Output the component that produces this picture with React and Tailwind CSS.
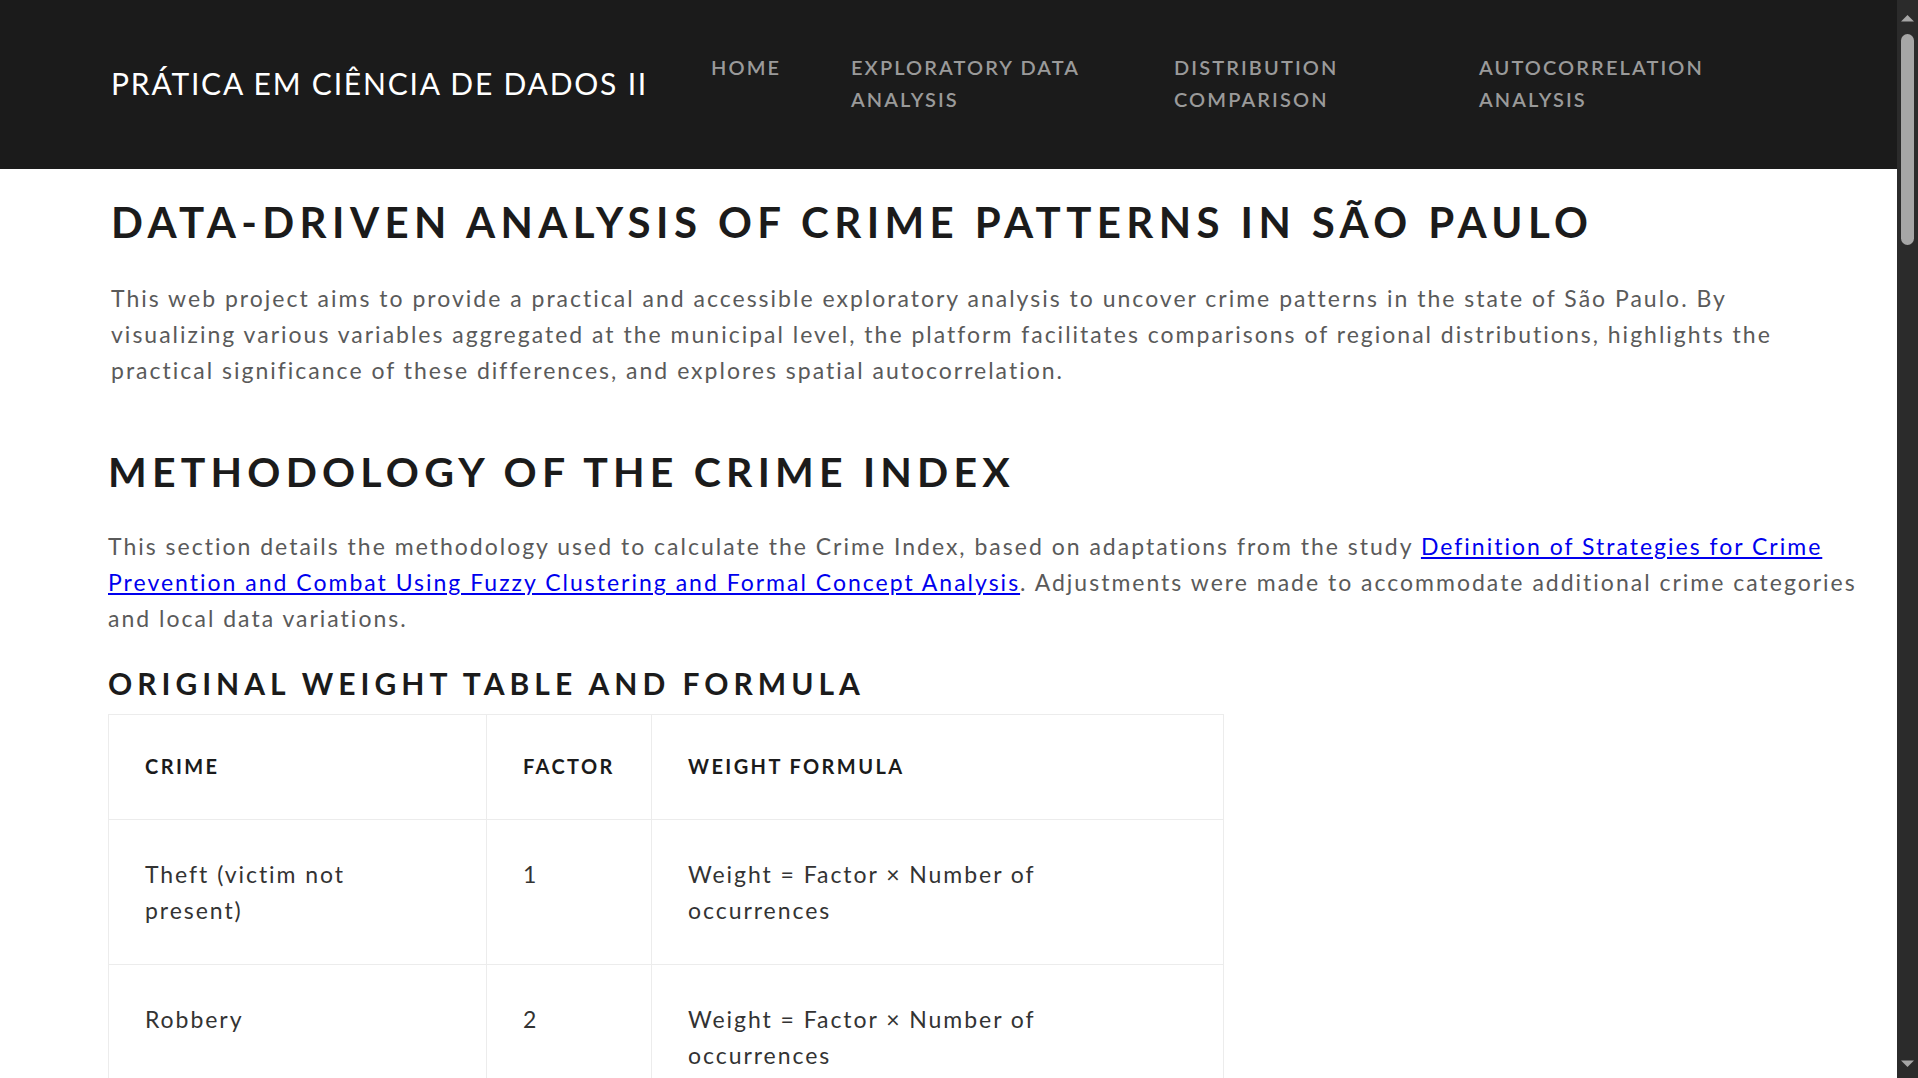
import React from "react";

const navItems = [
  { w: "w-[140px]", lines: ["HOME"] },
  { w: "w-[323px]", lines: ["EXPLORATORY DATA", "ANALYSIS"] },
  { w: "w-[305px]", lines: ["DISTRIBUTION", "COMPARISON"] },
  { w: "w-[300px]", lines: ["AUTOCORRELATION", "ANALYSIS"] },
];

const rows = [
  { crime: ["Theft (victim not", "present)"], factor: "1" },
  { crime: ["Robbery"], factor: "2" },
];

const cell =
  "border border-[#ececec] p-[36px] align-top text-[23px] leading-[36px] tracking-[1.95px] text-[#333333]";

export default function App() {
  return (
    <div className="flex h-screen overflow-hidden bg-white font-['Lato','Noto_Sans',sans-serif]">
      <div className="min-w-0 flex-1 overflow-hidden">
        <header className="flex h-[169px] items-center bg-[#1b1b1b] pl-[111px]">
          <div className="mb-[3px] w-[600px] text-[30px] leading-[40px] tracking-[1.8px] text-white">
            PRÁTICA EM CIÊNCIA DE DADOS II
          </div>
          <nav className="mb-[3px] flex items-start">
            {navItems.map((item, i) => (
              <div
                key={i}
                className={`${item.w} text-[20px] font-semibold leading-[32px] tracking-[2.1px] text-[#9a9a9a]`}
              >
                {item.lines.map((l, j) => (
                  <div key={j}>{l}</div>
                ))}
              </div>
            ))}
          </nav>
        </header>

        <main>
          <section className="pl-[111px] pr-[30px]">
            <h1 className="mt-[28px] text-[42px] font-bold leading-[50px] tracking-[5.4px] text-[#1b1b1b]">
              DATA-DRIVEN ANALYSIS OF CRIME PATTERNS IN SÃO PAULO
            </h1>
            <p className="mt-[33px] whitespace-nowrap text-[23px] leading-[36px] tracking-[2px] text-[#5a5a5a]">
              This web project aims to provide a practical and accessible exploratory analysis to uncover crime patterns in the state of São Paulo. By
              <br />
              visualizing various variables aggregated at the municipal level, the platform facilitates comparisons of regional distributions, highlights the
              <br />
              practical significance of these differences, and explores spatial autocorrelation.
            </p>
          </section>

          <section className="pl-[108px] pr-[20px]">
            <h2 className="mt-[59px] text-[41px] font-bold leading-[50px] tracking-[5.2px] text-[#1b1b1b]">
              METHODOLOGY OF THE CRIME INDEX
            </h2>
            <p className="mt-[31px] whitespace-nowrap text-[23px] leading-[36px] tracking-[2px] text-[#5a5a5a]">
              This section details the methodology used to calculate the Crime Index, based on adaptations from the study{" "}
              <a href="#" className="text-[#0000ee] underline">
                Definition of Strategies for Crime
                <br />
                Prevention and Combat Using Fuzzy Clustering and Formal Concept Analysis
              </a>
              . Adjustments were made to accommodate additional crime categories
              <br />
              and local data variations.
            </p>

            <h3 className="mt-[27px] text-[30px] font-bold leading-[40px] tracking-[5px] text-[#1b1b1b]">
              ORIGINAL WEIGHT TABLE AND FORMULA
            </h3>

            <table className="mt-[11px] w-[1115px] table-fixed border-collapse border border-[#ececec]">
              <colgroup>
                <col className="w-[378px]" />
                <col className="w-[165px]" />
                <col className="w-[572px]" />
              </colgroup>
              <thead>
                <tr>
                  {["CRIME", "FACTOR", "WEIGHT FORMULA"].map((h) => (
                    <th
                      key={h}
                      className="border border-[#ececec] px-[36px] pb-[37px] pt-[35px] text-left text-[20px] font-bold leading-[32px] tracking-[2.4px] text-[#1b1b1b]"
                    >
                      {h}
                    </th>
                  ))}
                </tr>
              </thead>
              <tbody>
                {rows.map((r, i) => (
                  <tr key={i}>
                    <td className={cell}>
                      {r.crime.map((l, j) => (
                        <div key={j}>{l}</div>
                      ))}
                    </td>
                    <td className={cell}>{r.factor}</td>
                    <td className={cell}>
                      <div>Weight = Factor × Number of</div>
                      <div>occurrences</div>
                    </td>
                  </tr>
                ))}
              </tbody>
            </table>
          </section>
        </main>
      </div>

      {/* scrollbar */}
      <div className="flex w-[21px] shrink-0 flex-col items-center bg-[#2b2b2b]">
        <svg width="15" height="8" viewBox="0 0 15 8" className="mt-[14px]">
          <path d="M1 7.5 L7.5 1 L14 7.5 Z" fill="#a6a6a6" />
        </svg>
        <div className="mt-[12px] h-[211px] w-[13px] rounded-full bg-[#a6a6a6]" />
        <svg width="15" height="8" viewBox="0 0 15 8" className="mb-[10px] mt-auto">
          <path d="M1 0.5 L14 0.5 L7.5 7 Z" fill="#a6a6a6" />
        </svg>
      </div>
    </div>
  );
}
